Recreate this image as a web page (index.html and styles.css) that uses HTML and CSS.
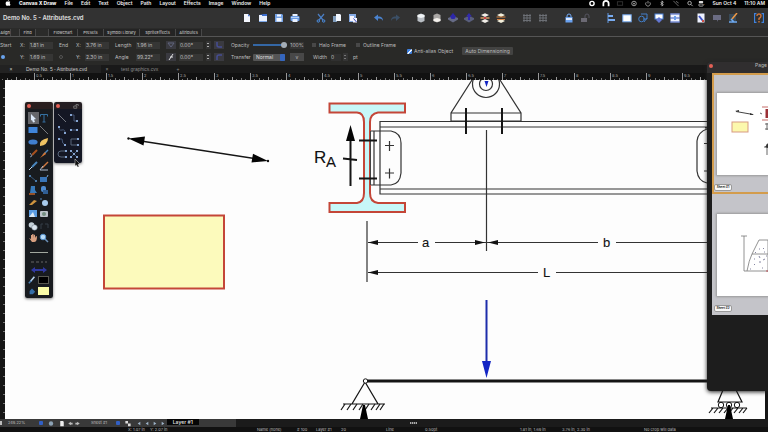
FILE: index.html
```html
<!DOCTYPE html>
<html lang="en">
<head>
<meta charset="utf-8">
<title>Canvas X Draw</title>
<link rel="stylesheet" href="styles.css">
</head>
<body>
<div class="app">
  <nav class="menubar" aria-label="Main menu">
    <svg class="apple" viewBox="0 0 12 14"><path d="M8 0C8 2 7 3 5.600 3.200 5.600 1.500 6.700.400 8 0ZM10 7.200C10 5.800 10.900 5 11.400 4.700 10 3 8.300 3.400 6.500 3.900 4.500 3.200 2.800 3.200 1.600 4.600-.8 7.400 1.500 13.600 4 13.600 5 13.600 5.400 13 6.600 13 7.700 13 8 13.600 9 13.600 10.200 13.600 11.400 11.400 11.700 10.300 10.700 9.800 10 8.800 10 7.200Z" fill="#fff"/></svg>
    <button class="strong">Canvas X Draw</button><button>File</button><button>Edit</button><button>Text</button><button>Object</button><button>Path</button><button>Layout</button><button>Effects</button><button>Image</button><button>Window</button><button>Help</button>
    <div class="tray">
      <svg viewBox="0 0 8 8"><circle cx="4" cy="4" r="2.400" fill="none" stroke="#fff" stroke-width="1.600"/></svg>
      <svg viewBox="0 0 8 8"><path d="M1 7V4a3 3 0 0 1 6 0V7" fill="none" stroke="#fff" stroke-width="2"/></svg>
      <svg viewBox="0 0 8 8"><rect x="1" y="2" width="6" height="4" fill="none" stroke="#333"/></svg>
      <svg viewBox="0 0 8 8"><circle cx="4" cy="4" r="2.600" fill="none" stroke="#aaa"/><circle cx="4" cy="4" r="1" fill="#aaa"/></svg>
      <svg viewBox="0 0 8 8"><path d="M2 2.500a2.700 2.700 0 1 0 4 0M4 1v3" fill="none" stroke="#999"/></svg>
      <svg viewBox="0 0 8 8"><path d="M2.500 2.500l3 3L4 7V1l1.500 1.500-3 3" fill="none" stroke="#ddd" stroke-width=".8"/></svg>
      <svg viewBox="0 0 8 8"><path d="M1 1l6 6M4 1.500l3 2" fill="none" stroke="#777"/></svg>
      <svg viewBox="0 0 8 8"><circle cx="3.500" cy="3.500" r="2" fill="none" stroke="#bbb"/><path d="M5 5l2 2" stroke="#bbb"/></svg>
      <svg class="control" viewBox="0 0 8 8"><rect x="1.500" y="1" width="5" height="2.500" rx="1" fill="#ddd"/><rect x="1.500" y="4.500" width="5" height="2.500" rx="1" fill="none" stroke="#ddd" stroke-width=".8"/><circle cx="7.500" cy="5" r=".5" fill="#e28a35"/></svg>
    </div>
    <span>Sun Oct 4</span><time>11:10 AM</time>
  </nav>

  <header class="toolbar">
    <h1>Demo No. 5 - Attributes.cvd</h1>
    <div class="group">
      <button aria-label="New"><svg viewBox="0 0 10 10"><path d="M2 1h4l2 2v6H2Z" fill="#f5f8ff"/><path d="M6 1v2.300h2.200Z" fill="#4b7cdb"/></svg></button>
      <button aria-label="Open"><svg viewBox="0 0 10 10"><path d="M1 2h8v7H1Z" fill="#eaf1ff"/><path d="M1 2h3v1h5V1H6" fill="#3c6fd2"/><path d="M1 8h8v1H1Z" fill="#7aa6e7"/></svg></button>
      <button aria-label="Save"><svg viewBox="0 0 10 10"><path d="M1 1h7l1 1v7H1Z" fill="#74a2e5"/><path d="M3 1.500h4v2H3ZM2.500 5h5v3.500h-5Z" fill="#f5f8ff"/></svg></button>
      <button aria-label="Print"><svg viewBox="0 0 10 10"><rect x=".5" y="3" width="9" height="5" rx="1" fill="#6799e4"/><path d="M2.500 1h5v2h-5ZM2.500 6h5v3h-5Z" fill="#e9f1ff"/><path d="M1 4.500h8" stroke="#b9d2f5"/></svg></button>
    </div>
    <div class="group">
      <button aria-label="Cut"><svg viewBox="0 0 10 10" fill="none"><path d="M2 1l5 6M8 1L3 7" stroke="#4b7fc5" stroke-width="1.200"/><circle cx="2.300" cy="8" r="1.200" stroke="#4b8ee2"/><circle cx="7.700" cy="8" r="1.200" stroke="#4b8ee2"/></svg></button>
      <button aria-label="Copy"><svg viewBox="0 0 10 10"><path d="M1 3h4v6H1Z" fill="#809dbd"/><path d="M4 1h4l1 1v6H4Z" fill="#f4f8ff"/></svg></button>
      <button aria-label="Paste"><svg viewBox="0 0 10 10"><path d="M1 1h7v8H1Z" fill="#86abe5"/><path d="M2 3h4v5H2ZM5 5h4v4.500H5Z" fill="#f4f4ff"/><path d="M5.500 5.500l3 3.500" stroke="#3747bd"/></svg></button>
    </div>
    <div class="group">
      <button aria-label="Undo"><svg viewBox="0 0 10 10"><path d="M0 4.500L4 1.500v2c4 0 5 2 5 4.500C8 6 7 5.600 4 5.600V8Z" fill="#4a83d0"/></svg></button>
      <button aria-label="Redo"><svg viewBox="0 0 10 10"><path d="M10 4.500L6 1.500v2C2 3.500 1 5.500 1 8c1-2 2-2.400 5-2.400V8Z" fill="#3b4f66"/></svg></button>
    </div>
    <div class="group">
      <button aria-label="Bring to front"><svg viewBox="0 0 10 10"><path d="M1.500 2L5 .5 8.500 2v6L5 9.500 1.500 8Z" fill="#b9bec4"/><path d="M1.500 2L5 1l3.500 1v2L5 5 1.500 4Z" fill="#f1f4f6"/></svg></button>
      <button aria-label="Send to back"><svg viewBox="0 0 10 10"><path d="M1.500 2L5 .5 8.500 2v6L5 9.500 1.500 8Z" fill="#aaa7a5"/><path d="M1.500 6L5 5l3.500 1v2L5 9 1.500 8Z" fill="#f4f1ed"/></svg></button>
      <button aria-label="Move forward"><svg viewBox="0 0 10 10"><path d="M0 5l5-2 5 2v1.500L5 9.500 0 6.500Z" fill="#666b86"/><path d="M5 0L8 3.500 6.500 6h-3L2 3.500Z" fill="#2d28aa"/></svg></button>
      <button aria-label="Move backward"><svg viewBox="0 0 10 10"><path d="M0 5l5-2 5 2v1.500L5 9.500 0 6.500Z" fill="#595e7c"/><path d="M5 0L8 3.500H6V7H4V3.500H2Z" fill="#322aae"/></svg></button>
      <button aria-label="Group"><svg viewBox="0 0 10 10"><path d="M1 2l4-1.800L9 2 5 4ZM1 8l4-2 4 2-4 2Z" fill="#f1eee8"/><path d="M.5 5h9" stroke="#d69b63" stroke-width="1.500"/><path d="M4 5h2" stroke="#c43e43" stroke-width="2"/></svg></button>
      <button aria-label="Ungroup"><svg viewBox="0 0 10 10"><path d="M1 2l4-1.800L9 2 5 4ZM1 8l4-2 4 2-4 2Z" fill="#f3efdb"/><path d="M.5 4h9M1 6.500h8" stroke="#d78545" stroke-width="1"/></svg></button>
    </div>
    <div class="group">
      <button aria-label="Grid"><svg viewBox="0 0 10 10"><path d="M2 1v8M5 1v8M8 1v8M1 2.500h8M1 5h8M1 7.500h8" stroke="#70747a" stroke-width=".9"/></svg></button>
      <button aria-label="Snap"><svg viewBox="0 0 10 10"><path d="M2 1v8M5 1v8M8 1v8M1 2.500h8M1 5h8M1 7.500h8" stroke="#70747a" stroke-width=".9"/></svg></button>
    </div>
    <div class="group">
      <button aria-label="Lock"><svg viewBox="0 0 10 10"><path d="M3 5V3a2 2 0 0 1 4 0v2" fill="none" stroke="#72a8f3"/><rect x="1.500" y="4" width="7" height="5.500" fill="#6ba2ef"/><path d="M2 6h6" stroke="#dce9ff" stroke-width="2"/></svg></button>
      <button aria-label="Unlock"><svg viewBox="0 0 10 10"><path d="M5 5V3a2 2 0 0 1 4 0v2" fill="none" stroke="#55545f"/><rect x="1" y="5" width="6" height="4" fill="#6b6973"/></svg></button>
    </div>
    <div class="group">
      <button aria-label="Align"><svg viewBox="0 0 10 10"><path d="M2 0v10" stroke="#6198e2"/><path d="M2 3h5M2 7h7" stroke="#78abf0" stroke-width="2"/></svg></button>
      <button aria-label="Rectangle"><svg viewBox="0 0 10 10"><rect x=".8" y="1.800" width="8.400" height="7" fill="#fff" stroke="#70a5ec"/></svg></button>
      <button aria-label="Combine"><svg viewBox="0 0 10 10" fill="none" stroke="#427fca"><circle cx="3.500" cy="6" r="2.800"/><path d="M3 1h6v5H5M6 9l3-4"/></svg></button>
      <button aria-label="Mask"><svg viewBox="0 0 10 10"><rect x="1" y="1" width="8" height="5" fill="#fff" stroke="#4d83db"/><path d="M2 7l3 3 3-3-3-3Z" fill="#6377d2"/></svg></button>
      <button aria-label="Distribute"><svg viewBox="0 0 10 10"><rect x=".5" y=".5" width="9" height="9" fill="#edf2ff"/><path d="M0 5h10M0 1h10M0 9h10" stroke="#3e5cbe"/><path d="M5 3v4" stroke="#6b9fea" stroke-width="2"/></svg></button>
    </div>
    <div class="group">
      <button aria-label="Page"><svg viewBox="0 0 10 10"><path d="M1.500.5h7v9h-7Z" fill="#eef2ff"/><path d="M3 3l4 5" stroke="#4155c8" stroke-width="2"/><path d="M7 7v2" stroke="#cf4f47" stroke-width="2"/></svg></button>
      <button aria-label="Comment"><svg viewBox="0 0 10 10"><path d="M1 2h8v5H6L5 9V7H1Z" fill="#6b6c83"/></svg></button>
      <button aria-label="Annotate"><svg viewBox="0 0 10 10"><path d="M1 1h7v7H1Z" fill="#374958"/><path d="M9 0L4 6" stroke="#ef9844" stroke-width="1.500"/><path d="M1 9h8M3 6l3 3" stroke="#6eaaf2" stroke-width="1.500"/></svg></button>
    </div>
    <div class="group">
      <button aria-label="Help"><svg viewBox="0 0 10 10" fill="none"><path d="M2.500 0.500H0.500v9h2M7.500 0.500h2v9h-2" stroke="#3f83df" stroke-width="1.300"/><path d="M3 3q0-2 2-2t2 2q0 1.500-2 2.500v1.500M5 8v1.500" stroke="#ce7337" stroke-width="1.400"/></svg></button>
    </div>
  </header>

  <nav class="palettes" aria-label="Palettes">
    <button class="w11">Align</button><button class="w17 solo">Find</button><button class="w30 edge">Flowchart</button><button class="w26">Presets</button><button class="w36">Symbol Library</button><button class="w36">SpriteEffects</button><button class="w26">Attributes</button>
  </nav>

  <section class="attributes" aria-label="Attributes">
    <div class="geometry">
      <span>Start</span><label for="x1">X:</label><input id="x1" value="1.81 in"><span>End</span><label for="x2">X:</label><input id="x2" value="3.76 in"><label for="len">Length</label><input id="len" value="1.96 in">
      <button class="mini" aria-label="Flip"><svg viewBox="0 0 8 8"><path d="M1 2h6L4 6Z" fill="none" stroke="#60647c"/></svg></button><input aria-label="Skew" value="0.00°"><button class="step" aria-label="Step skew"><svg viewBox="0 0 4 8"><path d="M1 3l1-1 1 1M1 5l1 1 1-1" stroke="#ccc" stroke-width=".8" fill="none"/></svg></button><button class="mini" aria-label="Flip horizontally"><svg viewBox="0 0 8 8"><path d="M2 1v3q0 2 2 2h3" fill="none" stroke="#454d92" stroke-width="1.500"/></svg></button>
      <span class="dot"></span><label for="y1">Y:</label><input id="y1" value="1.69 in"><span class="dot ring"></span><label for="y2">Y:</label><input id="y2" value="2.30 in"><label for="ang">Angle</label><input id="ang" value="99.22°">
      <button class="mini" aria-label="Slant"><svg viewBox="0 0 8 8"><path d="M2 7l4-6M3 4h3" stroke="#e2e2e2"/></svg></button><input aria-label="Rotation" value="0.00°"><button class="step" aria-label="Step rotation"><svg viewBox="0 0 4 8"><path d="M1 3l1-1 1 1M1 5l1 1 1-1" stroke="#ccc" stroke-width=".8" fill="none"/></svg></button><button class="mini" aria-label="Flip vertically"><svg viewBox="0 0 8 8"><path d="M2 7V4q0-2 2-2h3" fill="none" stroke="#454d92" stroke-width="1.500"/></svg></button>
    </div>
    <div class="rendering">
      <div class="line"><label class="name" for="op">Opacity</label><input id="op" class="range" type="range" value="100"><input class="pct" aria-label="Opacity percent" value="100%"><label class="tick halo"><input type="checkbox">Halo Frame</label><label class="tick"><input type="checkbox">Outline Frame</label></div>
      <div class="line"><label class="name" for="tr">Transfer</label><span class="pick"><select id="tr"><option>Normal</option></select><i></i></span><button class="more" aria-label="Transfer options">v</button><label class="wlabel" for="fw">Width</label><input id="fw" class="wide" value="0"><button class="step dim" aria-label="Step width"><svg viewBox="0 0 4 8"><path d="M1 3l1-1 1 1M1 5l1 1 1-1" stroke="#888" stroke-width=".8" fill="none"/></svg></button><span>pt</span></div>
    </div>
    <label class="tick alias"><input type="checkbox" checked>Anti-alias Object</label>
    <button class="auto">Auto Dimensioning</button>
  </section>

  <nav class="documents" aria-label="Open documents">
    <div class="doc current"><button aria-label="Close">×</button><a href="#drawing">Demo No. 5 - Attributes.cvd</a></div>
    <div class="doc"><button aria-label="Close">×</button><a href="#other">test graphics.cvx</a></div>
    <button class="plus" aria-label="New tab">+</button>
  </nav>

  <svg class="ruler-top" aria-hidden="true">
    <defs><pattern id="ticks" x="34" width="36" height="7" patternUnits="userSpaceOnUse"><path d="M.5 0v7M18.500 4v3" stroke="#999"/><path d="M4.500 6v1M9.500 5v2M13.500 6v1M22.500 6v1M27.500 5v2M31.500 6v1" stroke="#777"/></pattern></defs>
    <rect width="100%" height="7" fill="url(#ticks)"/>
    <g><text x="36" y="4">0.5</text><text x="72" y="4">1</text><text x="108" y="4">1.5</text><text x="144" y="4">2</text><text x="180" y="4">2.5</text><text x="216" y="4">3</text><text x="252" y="4">3.5</text><text x="288" y="4">4</text><text x="324" y="4">4.5</text><text x="360" y="4">5</text><text x="396" y="4">5.5</text><text x="432" y="4">6</text><text x="468" y="4">6.5</text><text x="504" y="4">7</text><text x="540" y="4">7.5</text><text x="576" y="4">8</text><text x="612" y="4">8.5</text><text x="648" y="4">9</text><text x="684" y="4">9.5</text></g>
  </svg>

  <main class="workspace">
    <div class="ruler-left"></div>
    <div class="canvas" id="drawing">
      <svg class="art" viewBox="5 80 763 339" role="img" aria-label="Beam support diagram">
        <g class="ink">
          <path d="M136 140.300L260 159.300" stroke-width="1.500"/>
          <circle cx="128.500" cy="138.500" r="1.200" fill="#111" stroke="none"/><circle cx="268" cy="161" r="1.200" fill="#111" stroke="none"/>
          <path d="M128.500 138.500L145 136.500 143.500 145.500ZM268 161L251.500 162.500 253 153.800Z" fill="#050505" stroke="none"/>
        </g>
        <rect x="104" y="215.500" width="120" height="73" fill="#fcfabc" stroke="#c44638" stroke-width="2"/>
        <g class="ink thin">
          <path d="M707 121.500H380V194H707M380 127H707M380 189H707M707 128H705"/>
          <path d="M370 131h21q10 2 10 12v30q-1 11-10 12H370ZM374 131v54"/>
          <path d="M385 145.500h9M389.500 141v10M385 173h9M389.500 168.500v10"/>
          <path d="M472 80L451 113v8h70v-8L500 80M451 113h70"/>
          <circle cx="486" cy="84" r="13.500"/><circle cx="486" cy="84" r="6.500"/>
          <path d="M707 129q-9 3-10 12v30q1 10 10 12M704 143.500h5M704 171h5"/>
          <path d="M486.500 130V251M367 221V282"/>
          <path d="M368 242.500H418M435 242.500H598M616 242.500H708M368 272.500H538M556 272.500H708"/>
        </g>
        <path d="M329.500 103.500H405V112.500H378Q370 114 370 122V193Q370 202 378 203H405V212H329.500V203H357Q364 202 364 193V122Q364 113 357 112.500H329.500Z" fill="#c7f7f8" stroke="#c44638" stroke-width="2"/>
        <path d="M370.500 131v54" stroke="#444"/>
        <g class="ink">
          <path d="M359 140.500h18M359 178.500h18M350.500 186V136M343 158.500l14 1.500" stroke-width="2"/>
          <path d="M466 108v26M502 108v26" stroke-width="2"/>
          <path d="M350.500 125L355 141H346Z" fill="#050505" stroke="none"/>
          <path d="M368 242.500l10-2.500v5ZM485 242.500l-10-2.500v5ZM488 242.500l10-2.500v5ZM368 272.500l10-2.500v5Z" fill="#111" stroke="none"/>
          <path d="M367 381H708" stroke-width="3"/>
          <path d="M365 382l-13 22h26ZM343 404h42" stroke-width="1.200"/>
          <path d="M345 404l-4 6M351 404l-4 6M357 404l-4 6M363 404l-4 6M369 404l-4 6M375 404l-4 6M380 404l-4 6M384 404l-4 6" stroke-width="1.200"/>
          <circle cx="365.500" cy="381" r="2.200" fill="#fdfdfd"/>
          <path d="M360 419l3-14h2l3 14Z" fill="#000" stroke="none"/>
          <path d="M723 390l-5 12h24l-6-12M711 408h36M713 408l-4 5M718 408l-4 5M723 408l-4 5M728 408l-4 5M733 408l-4 5M738 408l-4 5M743 408l-4 5M747 408l-4 5" stroke-width="1.200"/>
          <circle cx="721" cy="405" r="2.700"/><circle cx="729" cy="405" r="2.700"/><circle cx="737" cy="405" r="2.700"/>
          <path d="M725 419l3-14h2l3 14Z" fill="#000" stroke="none"/>
        </g>
        <path d="M486.500 300V366" stroke="#1d2dab" stroke-width="2"/><path d="M486.500 378l-4.500-17h9ZM486.500 87l-2-6h4Z" fill="#1426c4"/>
        <g class="caption"><text x="314" y="163" class="big">R</text><text x="326" y="167" class="sub">A</text><text x="422" y="247">a</text><text x="603" y="247">b</text><text x="543" y="277">L</text></g>
      </svg>

      <aside class="tools" aria-label="Tools">
        <button class="close" aria-label="Close tools"></button>
        <div class="toolgrid">
          <button class="selected" aria-label="Select"><svg viewBox="0 0 10 10"><path d="M3 1l5 5-2 .5L7 9 5 9.500 4 7 3 7.500Z" fill="#dce9f8"/></svg></button>
          <button aria-label="Text"><svg viewBox="0 0 10 10"><path d="M1.500 1.500h7v2M1.500 3.500v-2M5 1v8M3.500 9h3" stroke="#3471a1" fill="none"/></svg></button>
          <button aria-label="Rectangle"><svg viewBox="0 0 10 10"><rect x=".5" y="2" width="9" height="6" fill="#3f85da"/></svg></button>
          <button aria-label="Line"><svg viewBox="0 0 10 10"><path d="M1 1l8 8" stroke="#77797d"/></svg></button>
          <button aria-label="Oval"><svg viewBox="0 0 10 10"><ellipse cx="5" cy="5" rx="4.600" ry="2.600" fill="#407fd0"/></svg></button>
          <button aria-label="Shape"><svg viewBox="0 0 10 10"><path d="M1 8Q0 3 9 1 9 8 1 9Z" fill="#efc362"/></svg></button>
          <button aria-label="Pencil"><svg viewBox="0 0 10 10"><path d="M9 1L4 6" stroke="#a8511f" stroke-width="2"/><path d="M2 4l2 3-2 1" stroke="#8190a3" fill="none"/></svg></button>
          <button aria-label="Brush"><svg viewBox="0 0 10 10"><path d="M9 1L4 6" stroke="#4a87bd" stroke-width="1.500"/><path d="M6 3L1 9l6-4Z" fill="#db742b"/></svg></button>
          <button aria-label="Pen"><svg viewBox="0 0 10 10"><path d="M9 1L4 6" stroke="#4b86bd" stroke-width="2"/><path d="M4 6L1 9" stroke="#c5d9eb"/></svg></button>
          <button aria-label="Marker"><svg viewBox="0 0 10 10"><path d="M9 1L3 7" stroke="#cf7940" stroke-width="1.500"/><path d="M1 9h8M1 9l3-4" stroke="#abbace"/></svg></button>
          <button aria-label="Connector"><svg viewBox="0 0 10 10"><path d="M2 3l6 5" stroke="#36577a"/><path d="M1 2h2v2H1ZM7 7h2v2H7Z" fill="#4b79a8"/></svg></button>
          <button aria-label="Dimension"><svg viewBox="0 0 10 10"><path d="M1 4h7v5H1Z" fill="#3975b8"/><path d="M8 4l1-2" stroke="#7fa9d2"/></svg></button>
          <button aria-label="Stamp"><svg viewBox="0 0 10 10"><path d="M3 1h4v4l2 3H2Z" fill="#397aba"/><path d="M1 9h6" stroke="#bd632c" stroke-width="1.500"/></svg></button>
          <button aria-label="Effect"><svg viewBox="0 0 10 10"><rect x="2" y="1" width="5" height="6" rx="2" fill="#4e8bd0"/><path d="M4 5h5v4H4Z" fill="#305e95"/></svg></button>
          <button aria-label="Wand"><svg viewBox="0 0 10 10"><path d="M1 8l5-5 3 1-5 4Z" fill="#cf943f"/></svg></button>
          <button aria-label="Color picker"><svg viewBox="0 0 10 10"><circle cx="6" cy="6" r="3" fill="#a8cbed"/><circle cx="2" cy="2" r="1" fill="#3f658b"/></svg></button>
          <button aria-label="Image"><svg viewBox="0 0 10 10"><path d="M1 1h8v7H1Z" fill="#5b9ce2"/><path d="M1 8l4-5 2 5M6 2l3 5" fill="#dceaf5"/></svg></button>
          <button aria-label="Camera"><svg viewBox="0 0 10 10"><rect x="1" y="2" width="8" height="6" rx="1" fill="#bbc2c9"/><circle cx="5" cy="5" r="2" fill="#738e81"/></svg></button>
          <button aria-label="Clone"><svg viewBox="0 0 10 10"><circle cx="3.500" cy="4" r="2.800" fill="#c4d0d8"/><circle cx="6.500" cy="6.500" r="2.800" fill="#dbe5ee" stroke="#5e6c79" stroke-width=".5"/></svg></button>
          <button aria-label="Crop"><svg viewBox="0 0 10 10"><path d="M2 8V3h2M6 3h3v4" stroke="#343f48" fill="none"/></svg></button>
          <button aria-label="Pan"><svg viewBox="0 0 10 10"><path d="M1 5l2 1V2h1.200v3V1h1.200v4l.4-3.500L7 2v3l1-2 1 .5Q9 9 6 9H4Z" fill="#d79f80"/></svg></button>
          <button aria-label="Zoom"><svg viewBox="0 0 10 10"><path d="M6 6l3 3" stroke="#6b91ba" stroke-width="1.500"/><circle cx="4" cy="4" r="2.800" fill="#badcf8" stroke="#528ec9"/></svg></button>
        </div>
        <hr>
        <svg class="pens" viewBox="0 0 20 14"><path d="M2 3h3M7 3h3M12 3h2M16 3h2" stroke="#666"/><path d="M2 11l4-3v2h8V8l4 3-4 3v-2H6v2Z" fill="#3039a0"/></svg>
        <div class="colors"><svg viewBox="0 0 10 10"><path d="M8 1L3 7" stroke="#b6d2ec" stroke-width="2"/><path d="M1 9l3-3" stroke="#4c80b5" stroke-width="2"/></svg><button class="black" aria-label="Stroke color"></button><svg viewBox="0 0 10 10"><path d="M2 5l3-3 4 4-3 3H2Z" fill="#346ea9"/></svg><button class="yellow" aria-label="Fill color"></button></div>
      </aside>
      <aside class="lines" aria-label="Line tools">
        <button class="close" aria-label="Close line tools"></button>
        <svg class="pin" viewBox="0 0 8 8"><path d="M1 4h4v3H1ZM4 4V2h3v2" fill="none" stroke="#888"/></svg>
        <div class="linegrid">
          <button aria-label="Straight line"><svg viewBox="0 0 10 10"><path d="M1 1l8 8" stroke="#777b83"/></svg></button>
          <button aria-label="Step connector"><svg viewBox="0 0 10 10"><path d="M2 2h3v6h3" fill="none" stroke="#465775"/><path d="M1 1h2v2H1ZM7 7h2v2H7Z" fill="#85a4d1"/></svg></button>
          <button aria-label="Curved connector"><svg viewBox="0 0 10 10"><path d="M2 2q0 4 3 3t3 3" fill="none" stroke="#465775"/><path d="M1 1h2v2H1ZM7 7h2v2H7Z" fill="#85a4d1"/></svg></button>
          <button aria-label="Two point connector"><svg viewBox="0 0 10 10"><path d="M2 5h6" stroke="#465775"/><path d="M1 4h2v2H1ZM7 4h2v2H7Z" fill="#85a4d1"/></svg></button>
          <button aria-label="Right angle connector"><svg viewBox="0 0 10 10"><path d="M2 2h3q0 5 3 6" fill="none" stroke="#465775"/><path d="M1 1h2v2H1ZM7 7h2v2H7Z" fill="#85a4d1"/></svg></button>
          <button aria-label="Bracket connector"><svg viewBox="0 0 10 10"><path d="M8 2H2v6h6" fill="none" stroke="#59677b"/><path d="M8 1h2v2H8ZM8 7h2v2H8Z" fill="#85a4d1"/></svg></button>
          <button aria-label="Loop connector"><svg viewBox="0 0 10 10"><path d="M8 2H4Q1 2 1 5t3 3h4" fill="none" stroke="#59677b"/><path d="M8 1h2v2H8ZM8 7h2v2H8Z" fill="#85a4d1"/></svg></button>
          <button aria-label="Multi connector"><svg viewBox="0 0 10 10"><path d="M2 2l6 6M8 2L2 8" stroke="#3d5679"/><path d="M1 1h2v2H1ZM7 1h2v2H7ZM1 7h2v2H1ZM7 7h2v2H7ZM4 4h2v2H4Z" fill="#85a4d1"/></svg></button>
        </div>
        <svg class="pointer" viewBox="0 0 6 8"><path d="M1 0l5 5-2 .3L5 8 3.500 8 2.500 6 1 7Z" fill="#111" stroke="#ddd" stroke-width=".5"/></svg>
      </aside>
    </div>
  </main>

  <footer>
    <div class="bar">
      <div class="pager">
        <i class="chip"></i><span class="zoomlabel">249.22%</span><i class="blue"></i>
        <svg viewBox="0 0 8 8"><circle cx="4" cy="4" r="2.500" fill="#8ca2b5"/></svg>
        <svg viewBox="0 0 8 8"><path d="M2 1h3l1 1v5H2Z" fill="#eee"/></svg>
        <svg viewBox="0 0 8 8"><path d="M2 4l3-2v1h2v2H5v1Z" fill="#bbb"/></svg>
        <svg viewBox="0 0 8 8"><path d="M6 4L3 2v1H1v2h2v1Z" fill="#bbb"/></svg>
        <button class="sheet">Sheet #1</button><i class="blue"></i>
        <svg viewBox="0 0 8 8"><path d="M1 1h3v3H1ZM4 4h3v3H4Z" fill="#ddd"/></svg>
        <svg viewBox="0 0 8 8"><path d="M5.500 2v4l-3-2Z" fill="#9eb4c9"/></svg>
        <svg viewBox="0 0 8 8"><path d="M5.500 2v4l-3-2Z" fill="#9eb4c9"/></svg>
        <svg viewBox="0 0 8 8"><path d="M2.500 2v4l3-2Z" fill="#9eb4c9"/></svg>
        <svg viewBox="0 0 8 8"><path d="M2.500 2v4l3-2Z" fill="#9eb4c9"/></svg>
        <button class="layer">Layer #1</button>
      </div>
      <i class="handle"></i>
    </div>
    <div class="status"><span class="xy">X: 1.07 in</span><span class="yy">Y: 2.07 in</span><span class="obj">Name (none)</span><span class="count"># 100</span><span class="lay">Layer #1</span><span class="num">20</span><span class="kind">Line</span><span class="pt">0.50pt</span><span class="from">1.81 in, 1.69 in</span><span class="to">3.76 in, 2.30 in</span><span>No crop will data</span></div>
  </footer>

  <aside class="pages" aria-label="Page Manager">
    <header><button class="close" aria-label="Close pages"></button><span>Page Manager</span></header>
    <div class="sheetbox active"><div class="paper">
      <svg viewBox="0 0 52 82"><path d="M19 18.500l17 3" stroke="#444"/><path d="M18 18l4-1v2ZM37 22l-4-2v2Z" fill="#333"/><rect x="15" y="29" width="16" height="10" fill="#fcf8ad" stroke="#d79b83"/><path d="M45 14h8M45 27h8" stroke="#c56d68"/><path d="M50 16v9" stroke="#9b3036" stroke-width="3"/><path d="M43 20l2 1M50 30v7M48 31h4M48 36h4M47 54h5M50 51v11" stroke="#666"/><path d="M48 54l3-4v5Z" fill="#333"/></svg>
    </div><button>Sheet #1</button></div>
    <div class="sheetbox"><div class="paper">
      <svg viewBox="0 0 52 82" fill="none" stroke="#777" stroke-width=".8"><path d="M24 22h6M27 22v35h24M30 57q2-11 5-17l7-14h10M35 40h16M51 26v32"/><path d="M38 38l1 1M42 35h1M46 34l1 1M37 45h1M42 42l1 2M42 48h2M46 46l2-1M37 50l1 1M45 54h1M49 42h1M33 55h1M47 38h1" stroke="#67678a"/><path d="M49 57h3" stroke="#c43b42"/></svg>
    </div><button>Sheet #2</button></div>
  </aside>
</div>
</body>
</html>
```
FILE: styles.css
```css
* { box-sizing: border-box; }
body { margin: 0; background: #1d1d1d; color: #bdbdbd; font-family: Inter, "Liberation Sans", sans-serif; font-size: 5px; line-height: 6px; overflow: hidden; }
button, input, select { font: inherit; color: inherit; margin: 0; padding: 0; border: 0; background: transparent; white-space: nowrap; }
a { color: inherit; text-decoration: none; }
svg { display: block; }
.app { position: relative; display: flex; flex-direction: column; height: 100vh; min-height: 432px; }

.menubar { display: flex; align-items: center; height: 8px; padding: 0 3px 2px 5px; gap: 8px; background: #000; color: #eee; font-size: 5px; font-weight: 600; line-height: 6px; white-space: nowrap; }
.menubar .strong { font-weight: 800; }
.apple { width: 6px; height: 6px; }
.tray { display: flex; align-items: center; gap: 6px; margin-left: auto; }
.tray svg { width: 8px; height: 7px; flex: none; }
.tray .control { margin-left: -3px; }

.toolbar { display: flex; align-items: center; gap: 10px; height: 20px; background: #323232; }
.toolbar h1 { flex: 0 0 229px; margin: 0; padding-left: 3px; color: #e0e0e0; font-size: 6px; line-height: 8px; font-weight: 600; }
.group { display: flex; }
.group button { width: 16px; height: 16px; padding: 3px; }
.group svg { width: 10px; height: 10px; }

.palettes { display: flex; height: 9px; padding-top: 1px; background: #2b2b2a; border-bottom: 1px solid #555; font-size: 4px; font-weight: 500; }
.palettes button { border-right: 1px solid #484848; background: #242424; }
.w11 { width: 11px; }
.w17 { width: 17px; }
.w26 { width: 26px; }
.w30 { width: 30px; }
.w36 { width: 36px; }
.palettes .solo { margin-left: 8px; border-left: 1px solid #484848; }
.palettes .edge { margin-left: 12px; border-left: 1px solid #484848; }

.attributes { display: flex; height: 28px; padding-top: 2px; background: #292927; font-size: 5px; }
.geometry { display: grid; grid-template-columns: 20px 9px 30px 17px 9px 30px 21px 30px 13px 24px 11px 10px; grid-auto-rows: 12px; align-items: center; flex: none; }
.geometry input { width: 24px; height: 7px; padding-left: 1px; background: #363635; }
.mini { width: 10px; height: 8px; background: #3a3a40; }
.mini svg { width: 8px; height: 8px; margin: 0 auto; }
.step { width: 5px; height: 8px; justify-self: center; background: #343434; }
.step svg { width: 4px; height: 8px; }
.dot { width: 4px; height: 4px; margin-left: 1px; border-radius: 50%; background: #69a3ee; }
.ring { background: none; border: 1px solid #555; margin-left: 0; }
.rendering { flex: none; width: 180px; padding-left: 7px; }
.line { display: flex; align-items: center; height: 12px; }
.name { width: 22px; }
.range { appearance: none; width: 34px; height: 6px; background: linear-gradient(#3467a4, #3467a4) center / 100% 2px no-repeat; }
.range::-webkit-slider-thumb { appearance: none; width: 6px; height: 6px; border-radius: 50%; background: #a4adb5; }
.pct { width: 14px; height: 7px; margin: 0 8px 0 3px; background: #343434; text-align: center; }
.tick { display: flex; align-items: center; gap: 3px; white-space: nowrap; }
.tick input { appearance: none; width: 4px; height: 4px; background: #484848; }
.halo { width: 44px; }
.pick { position: relative; width: 32px; height: 7px; margin-right: 5px; }
.pick select { appearance: none; width: 100%; height: 7px; padding-left: 3px; border-radius: 1px; background: #555; display: block; color: #ddd; }
.pick i { position: absolute; right: 0; top: 0; width: 5px; height: 7px; border-radius: 1px; background: #3566bd; }
.more { width: 14px; height: 8px; background: #484848; }
.wlabel { width: 18px; margin-left: 9px; }
.wide { width: 10px; height: 7px; background: #303030; }
.dim { margin: 0 5px 0 2px; }
.alias { gap: 2px; width: 54px; height: 24px; padding-left: 3px; }
.alias input { width: 5px; height: 5px; border-radius: 1px; background: #3e80df; }
.tick input:checked { background: linear-gradient(135deg, #3e80df 45%, #eaf3ff 45%, #eaf3ff 60%, #3e80df 60%); }
.auto { flex: none; width: 51px; height: 8px; margin: 8px 0 0 4px; border-radius: 1px; background: #434342; }

.documents { display: flex; height: 8px; background: #191919; color: #888; font-family: "Liberation Sans", sans-serif; line-height: 8px; }
.doc { display: flex; width: 74px; }
.doc button { width: 12px; margin-right: 8px; line-height: 8px; }
.current { width: 101px; background: #222; color: #ccc; }
.current button { width: 22px; margin-right: 4px; }
.plus { width: 6px; line-height: 8px; }
.ruler-top { display: block; flex: none; width: 100%; height: 7px; background: #111; font-size: 4px; fill: #aaa; }
.workspace { display: flex; flex: 1; min-height: 0; background: #151515; }
.ruler-left { width: 5px; background: repeating-linear-gradient(#151515 0 8px, #777 8px 9px) right / 2px 100% no-repeat, #151515; }
.canvas { position: relative; flex: 1; margin-right: 3px; overflow: hidden; background: #fdfdfd; }
.art { width: 763px; height: 339px; }
.ink { fill: none; stroke: #151515; }
.thin { stroke: #333; stroke-width: 1.2; }
.caption { fill: #111; stroke: #111; stroke-width: .1px; font-family: "Liberation Sans", sans-serif; font-size: 13px; }
.big { font-size: 17px; }
.sub { font-size: 15px; }

.tools, .lines { position: absolute; top: 22px; width: 28px; border-radius: 2px; box-shadow: 0 1px 3px #777; }
.tools { left: 20px; padding: 10px 3px 3px; background: linear-gradient(#291e1e 7px, #181b1f 7px); }
.close { position: absolute; left: 2px; top: 2px; width: 4px; height: 4px; border-radius: 50%; background: #e36056; }
.toolgrid { display: grid; grid-template-columns: 11px 11px; grid-auto-rows: 12px; }
.toolgrid button { padding: 1px 0; }
.linegrid button { padding: 1px; }
.toolgrid svg, .linegrid svg { width: 10px; height: 10px; }
.toolgrid .selected { background: #65666a; }
.tools hr { margin: 8px 2px 6px; border: 0; border-top: 1px solid #a1a79f; }
.pens { width: 20px; height: 14px; margin: 0 auto 3px; }
.colors { display: grid; grid-template-columns: 9px 11px; gap: 3px 1px; align-items: center; }
.colors svg { width: 8px; height: 8px; }
.colors button { width: 11px; height: 8px; border: 1px solid #57574f; }
.black { background: #000; }
.colors .yellow { background: #fafba7; border-color: #fafba7; }
.lines { left: 49px; height: 61px; padding: 10px 2px; background: linear-gradient(#241e22 7px, #141724 7px); }
.pin { position: absolute; right: 3px; top: 1px; width: 6px; height: 6px; }
.linegrid { display: grid; grid-template-columns: 12px 12px; grid-auto-rows: 12px; }
.pointer { position: absolute; right: 2px; bottom: -4px; width: 6px; height: 8px; }

footer { height: 13px; background: #1b1b1b; }
.bar { display: flex; align-items: center; height: 8px; }
.pager { display: flex; align-items: center; width: 236px; height: 8px; padding-right: 37px; background: #393939; font-size: 5px; line-height: 6px; }
.pager svg { width: 8px; height: 7px; flex: none; }
.chip { width: 2px; height: 4px; background: #bbb; }
.zoomlabel { width: 39px; padding-left: 6px; font-size: 4px; }
.blue { width: 4px; height: 4px; margin-right: 4px; border-radius: 1px; background: #315fc5; }
.pager .blue + svg { margin-right: 3px; }
.sheet { width: 35px; font-size: 4px; }
.layer { height: 6px; width: 34px; margin: 0 0 2px auto; background: #050505; color: #ddd; font-weight: 600; }
.handle { width: 7px; height: 2px; margin-left: 174px; background: repeating-linear-gradient(90deg, #aaa 0 1px, #555 1px 2px); }
.status { display: flex; height: 5px; overflow: hidden; background: #111; font-size: 4px; line-height: 5px; white-space: nowrap; }
.xy { width: 22px; margin-left: 128px; }
.yy { width: 107px; }
.obj { width: 40px; }
.count { width: 19px; }
.lay { width: 25px; }
.num { width: 45px; }
.kind { width: 39px; }
.pt { width: 95px; }
.from { width: 42px; }
.to { width: 82px; }

.pages { position: absolute; left: 707px; right: 0; top: 62px; height: 329px; padding-left: 5px; overflow: hidden; border-radius: 4px 0 0 4px; background: #1d1d1d; box-shadow: 0 1px 4px #222; }
.pages header { height: 11px; margin-left: -5px; background: #302e2f; padding-left: 48px; white-space: nowrap; font-size: 5px; line-height: 7px; }
.sheetbox { height: 121px; padding: 20px 0 0 5px; background: #c4c4c9; overflow: hidden; }
.active { padding-top: 18px; padding-left: 3px; border: 2px solid #d39c4c; border-right: 0; }
.paper { height: 82px; background: #fff; box-shadow: 0 0 2px 1px #999; overflow: hidden; }
.paper svg { width: 52px; height: 82px; }
.sheetbox button { display: block; width: 18px; height: 7px; margin: 9px 0 0 -3px; border: 1px solid #999; border-radius: 2px; background: #f8f8f8; color: #222; font-size: 3px; line-height: 5px; font-weight: 700; }
```
